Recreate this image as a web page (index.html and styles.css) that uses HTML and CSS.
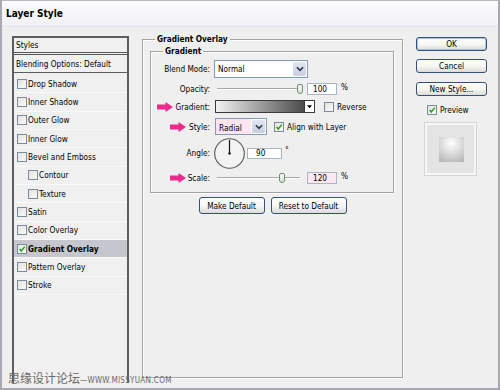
FILE: index.html
```html
<!DOCTYPE html>
<html lang="en">
<head>
    <meta charset="UTF-8">
    <title>Layer Style</title>
    <link rel="stylesheet" href="styles.css">
</head>
<body>
    <div class="window">
        <div class="titlebar">Layer Style</div>
        <div class="content">
            <div class="styles-panel">
                <div class="panel-head">Styles</div>
                <div class="panel-blend">Blending Options: Default</div>
                <ul class="fx-list">
                    <li><span class="check"></span>Drop Shadow</li>
                    <li><span class="check"></span>Inner Shadow</li>
                    <li><span class="check"></span>Outer Glow</li>
                    <li><span class="check"></span>Inner Glow</li>
                    <li><span class="check"></span>Bevel and Emboss</li>
                    <li class="sub"><span class="check"></span>Contour</li>
                    <li class="sub"><span class="check"></span>Texture</li>
                    <li><span class="check"></span>Satin</li>
                    <li><span class="check"></span>Color Overlay</li>
                    <li class="active"><span class="check on"><svg viewBox="0 0 10 10"><path d="M2 5 L4 7.5 L8.5 2" /></svg></span>Gradient Overlay</li>
                    <li><span class="check"></span>Pattern Overlay</li>
                    <li><span class="check"></span>Stroke</li>
                </ul>
            </div>

            <fieldset class="group outer">
                <legend>Gradient Overlay</legend>
                <fieldset class="group inner">
                    <legend>Gradient</legend>

                    <div class="row row-blend">
                        <span class="label">Blend Mode:</span>
                        <div class="controls">
                            <div class="select select-blend">
                                <span class="select-text">Normal</span>
                                <span class="select-btn"><svg viewBox="0 0 9 6"><path d="M1 1 L4.5 4.5 L8 1" /></svg></span>
                            </div>
                        </div>
                    </div>

                    <div class="row row-opacity">
                        <span class="label">Opacity:</span>
                        <div class="controls">
                            <div class="slider"><span class="track"></span><span class="thumb thumb-opacity"></span></div>
                            <span class="field">100</span>
                            <span class="unit">%</span>
                        </div>
                    </div>

                    <div class="row row-gradient">
                        <span class="label"><svg class="arrow" viewBox="0 0 16 10"><path d="M0 2.5 H8.5 V0 L16 5 L8.5 10 V7.5 H0 Z" /></svg>Gradient:</span>
                        <div class="controls">
                            <div class="gradient-bar"><span class="gradient-fill"></span><span class="gradient-btn"><svg viewBox="0 0 6 4"><path d="M0 0 H6 L3 3.5 Z" /></svg></span></div>
                            <span class="check reverse-check"></span>
                            <span class="check-text">Reverse</span>
                        </div>
                    </div>

                    <div class="row row-style">
                        <span class="label"><svg class="arrow" viewBox="0 0 16 10"><path d="M0 2.5 H8.5 V0 L16 5 L8.5 10 V7.5 H0 Z" /></svg>Style:</span>
                        <div class="controls">
                            <div class="select select-style">
                                <span class="select-text">Radial</span>
                                <span class="select-btn"><svg viewBox="0 0 9 6"><path d="M1 1 L4.5 4.5 L8 1" /></svg></span>
                            </div>
                            <span class="check on align-check"><svg viewBox="0 0 10 10"><path d="M2 5 L4 7.5 L8.5 2" /></svg></span>
                            <span class="check-text">Align with Layer</span>
                        </div>
                    </div>

                    <div class="row row-angle">
                        <span class="label">Angle:</span>
                        <div class="controls">
                            <svg class="dial" viewBox="0 0 31 31">
                                <circle cx="15.5" cy="15.5" r="14.8" />
                                <line x1="15.5" y1="15.5" x2="15.5" y2="2" />
                                <circle class="dot" cx="15.5" cy="15.5" r="1.2" />
                            </svg>
                            <span class="field field-angle">90</span>
                            <span class="unit deg">°</span>
                        </div>
                    </div>

                    <div class="row row-scale">
                        <span class="label"><svg class="arrow" viewBox="0 0 16 10"><path d="M0 2.5 H8.5 V0 L16 5 L8.5 10 V7.5 H0 Z" /></svg>Scale:</span>
                        <div class="controls">
                            <div class="slider"><span class="track"></span><span class="thumb thumb-scale"></span></div>
                            <span class="field field-pink">120</span>
                            <span class="unit">%</span>
                        </div>
                    </div>
                </fieldset>

                <div class="defaults">
                    <span class="btn btn-make">Make Default</span>
                    <span class="btn btn-reset">Reset to Default</span>
                </div>
            </fieldset>

            <div class="side">
                <span class="btn side-btn btn-ok">OK</span>
                <span class="btn side-btn">Cancel</span>
                <span class="btn side-btn">New Style...</span>
                <div class="preview-row">
                    <span class="check on"><svg viewBox="0 0 10 10"><path d="M2 5 L4 7.5 L8.5 2" /></svg></span>
                    <span class="check-text">Preview</span>
                </div>
                <div class="preview-box"><span class="preview-swatch"></span></div>
            </div>
        </div>

        <div class="watermark"><span class="wm-cn">思缘设计论坛</span><span class="wm-en">—WWW.MISSYUAN.COM</span></div>
    </div>
</body>
</html>
```

FILE: styles.css
```css
* {
    box-sizing: border-box;
}

body {
    margin: 0;
    width: 500px;
    height: 390px;
    overflow: hidden;
    background: #efefef;
    font-family: "DejaVu Sans Condensed", "DejaVu Sans", sans-serif;
    font-stretch: semi-condensed;
    font-size: 8.2px;
    color: #000;
}

.window {
    position: relative;
    width: 500px;
    height: 390px;
    border: 2px solid #a8a8b3;
    border-top: 1px solid #b9b9c4;
    background: #efefef;
}

.titlebar {
    height: 26px;
    padding-left: 4px;
    display: flex;
    align-items: center;
    background: linear-gradient(#fcfcfe, #f1f1f5);
    border-bottom: 1px solid #e4e4ea;
    font-weight: bold;
    font-size: 10px;
}

.content {
    display: flex;
    align-items: flex-start;
    padding-left: 10px;
}

/* left list of effects */
.styles-panel {
    margin-top: 9px;
    width: 117px;
    height: 347px;
    border: 2px solid #5d5d5d;
    border-bottom: none;
    background: #f0f0f0;
}

.panel-head {
    height: 17px;
    padding: 0 0 0 2px;
    line-height: 14px;
    border-bottom: 3px double #555;
}

.panel-blend {
    height: 18px;
    padding: 2px 0 0 2px;
    line-height: 15px;
    border-bottom: 1px solid #5d5d5d;
}

.fx-list {
    list-style: none;
    margin: 0;
    padding: 2px 0 0 0;
}

.fx-list li {
    display: flex;
    align-items: center;
    height: 18.33px;
    padding-left: 3px;
    border-bottom: 1px solid #f9f9f9;
}

.fx-list li.sub {
    padding-left: 14px;
}

.fx-list li.active {
    background: #c6c6ce;
    font-weight: bold;
}

.fx-list .check {
    margin-right: 1px;
}

.check {
    display: inline-flex;
    width: 10px;
    height: 10px;
    flex: none;
    border: 1px solid #7b8a9c;
    background: linear-gradient(135deg, #e3e3dc, #fbfbf9);
}

.check svg {
    width: 8px;
    height: 8px;
    fill: none;
    stroke: #22a022;
    stroke-width: 1.8;
}

.check-text {
    margin-left: 3px;
}

/* middle fieldsets */
.group {
    margin: 0;
    border: 1px solid #a2a2a2;
    box-shadow: 1px 1px 0 #fff, inset 1px 1px 0 #fff;
}

.group legend {
    font-weight: bold;
    line-height: 10px;
    padding: 0 2px;
}

.outer {
    margin-top: 7px;
    margin-left: 13px;
    width: 261px;
    height: 344px;
    padding: 2px 7px 0 7px;
}

.outer > legend {
    margin-left: 5px;
}

.inner {
    width: 244px;
    height: 147px;
    padding: 4px 0 6px 0;
}

.inner > legend {
    margin-left: 12px;
}

.row {
    display: grid;
    grid-template-columns: 59px 1fr;
    column-gap: 4px;
    align-items: center;
}

.label {
    display: flex;
    justify-content: flex-end;
    align-items: center;
    gap: 2px;
}

.arrow {
    width: 16px;
    height: 10px;
    fill: #ee2a8c;
}

.controls {
    display: flex;
    align-items: center;
    height: 100%;
}

.row-blend { height: 18px; }
.row-opacity { height: 14px; margin-top: 4px; }
.row-gradient { height: 13px; margin-top: 4px; }
.row-style { height: 17px; margin-top: 5px; }
.row-angle { height: 32px; margin-top: 2px; }
.row-scale { height: 14px; margin-top: 2px; }

.row-style .label {
    gap: 3px;
}

.select {
    display: flex;
    height: 100%;
    border: 1px solid #7f9db9;
    background: #fff;
}

.select-text {
    flex: 1;
    display: flex;
    align-items: center;
    padding-left: 3px;
}

.select-btn {
    display: flex;
    align-items: center;
    justify-content: center;
    width: 13px;
    margin: 1px;
    border-radius: 2px;
    background: linear-gradient(#e2e6f2, #c8cde0);
}

.select-btn svg {
    width: 8px;
    height: 6px;
    fill: none;
    stroke: #2b3550;
    stroke-width: 1.8;
}

.select-blend {
    width: 94px;
}

.select-style {
    width: 52px;
    margin-left: 1px;
}

.select-style .select-text {
    background: #fbe5ee;
    padding-top: 2px;
}

.slider {
    position: relative;
    width: 89px;
    height: 100%;
}

.track {
    position: absolute;
    left: 3px;
    right: 3px;
    top: 6px;
    height: 2px;
    border-top: 1px solid #a9a9a9;
    background: #fff;
}

.thumb {
    position: absolute;
    top: 2px;
    width: 6px;
    height: 10px;
    border: 1px solid #6d8f6d;
    border-radius: 2px 2px 3px 3px;
    background: linear-gradient(#f6f9f4, #d9e3d5);
}

.thumb-opacity { left: 83px; }
.thumb-scale { left: 65px; }

.field {
    display: flex;
    align-items: center;
    width: 30px;
    height: 12px;
    margin-left: 4px;
    padding-left: 5px;
    border: 1px solid #a8b6c4;
    background: #fff;
}

.field-pink {
    background: #fce9ef;
}

.field-angle {
    width: 35px;
    height: 11px;
    margin-left: 2px;
    padding-left: 8px;
}

.unit {
    margin-left: 4px;
    align-self: flex-start;
}

.deg {
    margin-left: 3px;
    margin-top: 8px;
}

.gradient-bar {
    display: flex;
    width: 100px;
    height: 100%;
    margin-left: 1px;
    border: 1px solid #3a3a3a;
}

.gradient-fill {
    flex: 1;
    background: linear-gradient(to right, #f2f2f2, #4b4b4b);
}

.gradient-btn {
    display: flex;
    align-items: center;
    justify-content: center;
    width: 10px;
    border-left: 1px solid #3a3a3a;
    background: #fff;
}

.gradient-btn svg {
    width: 5px;
    height: 4px;
    fill: #000;
}

.reverse-check {
    margin-left: 9px;
}

.align-check {
    margin-left: 7px;
}

.dial {
    width: 31px;
    height: 31px;
}

.dial circle {
    fill: #f3f3f3;
    stroke: #5a5a5a;
    stroke-width: 1.1;
}

.dial line {
    stroke: #111;
    stroke-width: 1.2;
}

.dial .dot {
    fill: #111;
    stroke: none;
}

/* buttons */
.btn {
    display: flex;
    align-items: center;
    justify-content: center;
    border: 1px solid #35507c;
    border-radius: 3px;
    background: linear-gradient(#ffffff, #f5f5f1 55%, #dcdcd5);
}

.defaults {
    display: flex;
    justify-content: center;
    gap: 6px;
    margin-top: 4px;
}

.btn-make {
    width: 66px;
    height: 17px;
}

.btn-reset {
    width: 76px;
    height: 17px;
}

.side {
    display: flex;
    flex-direction: column;
    margin-top: 10px;
    margin-left: 13px;
    width: 71px;
}

.side-btn {
    height: 14px;
    margin-bottom: 8px;
}

.side-btn + .side-btn {
    margin-bottom: 9px;
}

.btn-ok {
    box-shadow: inset 0 0 0 1px #a9c2ea;
}

.preview-row {
    display: flex;
    align-items: center;
    height: 11px;
    margin-top: -1px;
    padding-left: 11px;
}

.preview-box {
    display: flex;
    align-items: center;
    justify-content: center;
    width: 53px;
    height: 54px;
    margin-top: 7px;
    margin-left: 8px;
    border: 1px solid #d4d4d4;
    box-shadow: inset 0 0 0 2px #f7f7f7;
    background: #e4e4e4;
}

.preview-swatch {
    width: 25px;
    height: 25px;
    margin-left: 2px;
    background: radial-gradient(circle at 50% 25%, #ffffff, #c9c9c9 70%, #b2b2b2);
}

.watermark {
    position: absolute;
    left: 6px;
    bottom: 2px;
    display: flex;
    align-items: baseline;
    color: #6b6b6b;
}

.wm-cn {
    font-family: "Noto Sans CJK SC", sans-serif;
    font-size: 12px;
}

.wm-en {
    font-family: "DejaVu Sans Condensed", "DejaVu Sans", sans-serif;
    font-size: 8px;
    letter-spacing: 0.3px;
}
```
